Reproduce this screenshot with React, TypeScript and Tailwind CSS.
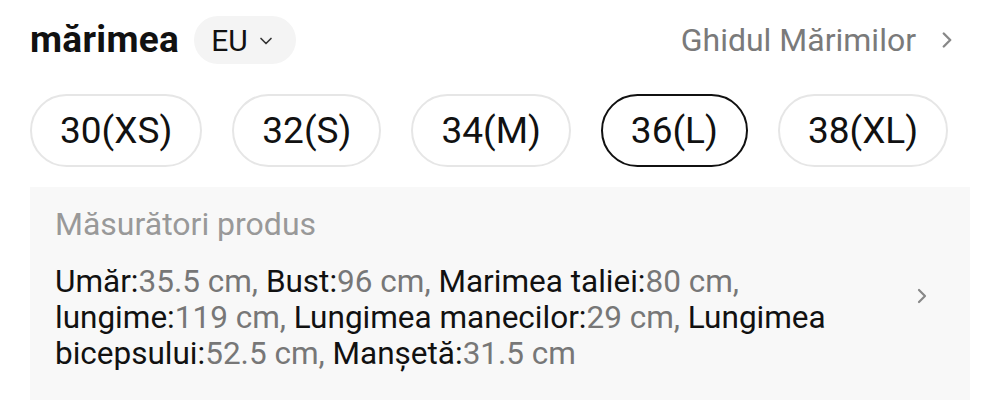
import { ChevronDown, ChevronRight } from 'lucide-react';

const SIZES = ['30(XS)', '32(S)', '34(M)', '36(L)', '38(XL)'];
const SELECTED = '36(L)';

const MEASURES: [string, string][] = [
  ['Umăr', '35.5 cm'],
  ['Bust', '96 cm'],
  ['Marimea taliei', '80 cm'],
  ['lungime', '119 cm'],
  ['Lungimea manecilor', '29 cm'],
  ['Lungimea bicepsului', '52.5 cm'],
  ['Manșetă', '31.5 cm'],
];

export default function App() {
  return (
    <div className="h-[419px] w-[1000px] overflow-hidden bg-white px-[30px] text-[#111]" style={{ fontFamily: 'Roboto, "Noto Sans", sans-serif' }}>
      <div className="flex h-[80px] items-center justify-between">
        <div className="flex items-center gap-[15px]">
          <h1 className="text-[37px] font-bold tracking-[0.3px]">mărimea</h1>
          <button className="flex h-[48px] items-center gap-[8px] rounded-full bg-[#f4f4f4] pr-[20px] pl-[17px] text-[30px]">
            EU <ChevronDown size={20} strokeWidth={2} className="mt-[2px] text-[#333]" />
          </button>
        </div>
        <button className="flex items-center gap-[18px] pr-[10px] text-[32px] text-[#7a7a7a]">
          Ghidul Mărimilor <ChevronRight size={26} strokeWidth={2.2} className="text-[#888]" />
        </button>
      </div>

      <div className="mt-[14px] flex gap-[30px]">
        {SIZES.map((s) => (
          <button
            key={s}
            className={`flex h-[73px] items-center rounded-full border-2 px-[28px] text-[37px] ${s === SELECTED ? 'border-[#111]' : 'border-[#e6e6e6]'}`}
          >
            {s}
          </button>
        ))}
      </div>

      <div className="mt-[20px] flex h-[213px] items-center bg-[#f8f8f8] pr-[36px] pl-[25px]">
        <div className="flex-1 self-start pt-[17px]">
          <div className="text-[32px] leading-[40px] text-[#999]">Măsurători produs</div>
          <p className="mt-[20px] w-[840px] text-[31.5px] leading-[36px]">
            {MEASURES.map(([k, v], i) => (
              <span key={k}>
                {k}:<span className="text-[#777]">{v}{i < MEASURES.length - 1 ? ',' : ''}</span>{i < MEASURES.length - 1 ? ' ' : ''}
              </span>
            ))}
          </p>
        </div>
        <ChevronRight size={24} strokeWidth={2.2} className="mt-[4px] text-[#888]" />
      </div>
    </div>
  );
}
